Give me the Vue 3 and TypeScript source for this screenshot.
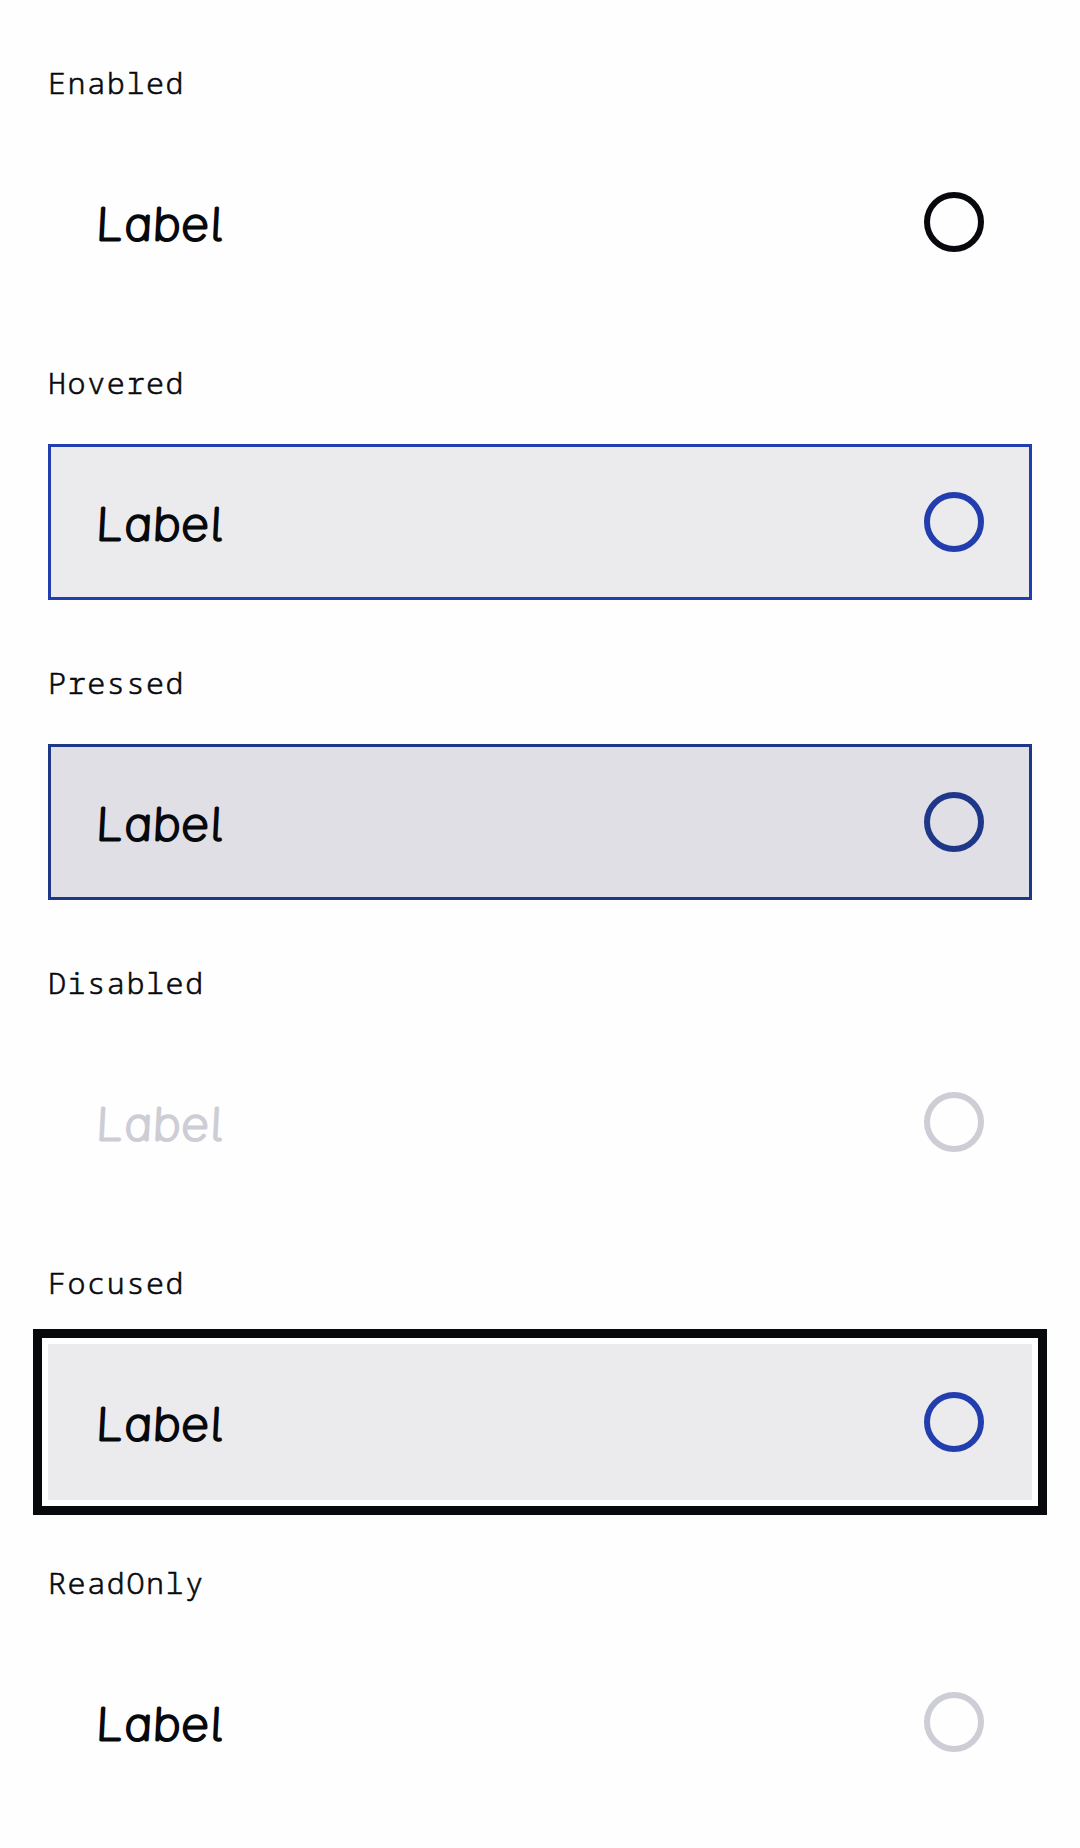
<script setup lang="ts">
interface RadioState {
  name: string
  kind: string
}

const states: RadioState[] = [
  { name: 'Enabled', kind: 'enabled' },
  { name: 'Hovered', kind: 'hovered' },
  { name: 'Pressed', kind: 'pressed' },
  { name: 'Disabled', kind: 'disabled' },
  { name: 'Focused', kind: 'focused' },
  { name: 'ReadOnly', kind: 'readonly' },
]
</script>

<template>
  <main class="page">
    <section v-for="s in states" :key="s.kind" class="state">
      <h2 class="title">{{ s.name }}</h2>
      <div class="row" :class="s.kind">
        <svg class="label" width="150" height="60" viewBox="0 0 150 60">
          <text transform="translate(0 47.5) skewX(-3) scale(1.08 1)" x="-0.5 26 52 78.5 105.5" y="0">Label</text>
        </svg>
        <span class="radio"></span>
      </div>
    </section>
  </main>
</template>

<style>
body {
  margin: 0;
  background: #fff;
}
</style>

<style scoped>
.page {
  box-sizing: border-box;
  width: 1080px;
  height: 1848px;
  padding: 0 48px;
  overflow: hidden;
  background: #fefefe;
  color: #08090d;
}
.state {
  display: flex;
  flex-direction: column;
  height: 300px;
}
.title {
  box-sizing: border-box;
  height: 144px;
  margin: 0;
  padding-top: 59px;
  font: 300 30px/48px 'Droid Sans Mono', 'Noto Sans Mono', 'DejaVu Sans Mono', monospace;
  letter-spacing: 1.6px;
  -webkit-text-stroke: 0.6px currentColor;
}
.row {
  box-sizing: border-box;
  display: flex;
  justify-content: space-between;
  height: 156px;
  padding: 45px;
  border: 3px solid transparent;
}
.label {
  display: block;
  overflow: visible;
  font: 100 44px Inter, sans-serif;
  font-feature-settings: 'cv05', 'cv11';
  fill: currentColor;
  stroke: currentColor;
  stroke-width: 3px;
  stroke-linejoin: round;
}
.radio {
  box-sizing: border-box;
  width: 60px;
  height: 60px;
  border: 6px solid currentColor;
  border-radius: 50%;
}
.hovered {
  background: #ebebed;
  border-color: #213dae;
}
.hovered .radio,
.focused .radio {
  color: #213dae;
}
.pressed {
  background: #e0dfe5;
  border-color: #1e3789;
}
.pressed .radio {
  color: #1e3789;
}
.disabled,
.readonly .radio {
  color: #cdcdd6;
}
.focused {
  background: #ebebed;
  border-color: #ebebed;
  box-shadow: 0 0 0 6px #fff, 0 0 0 15px #08090d;
}
</style>
